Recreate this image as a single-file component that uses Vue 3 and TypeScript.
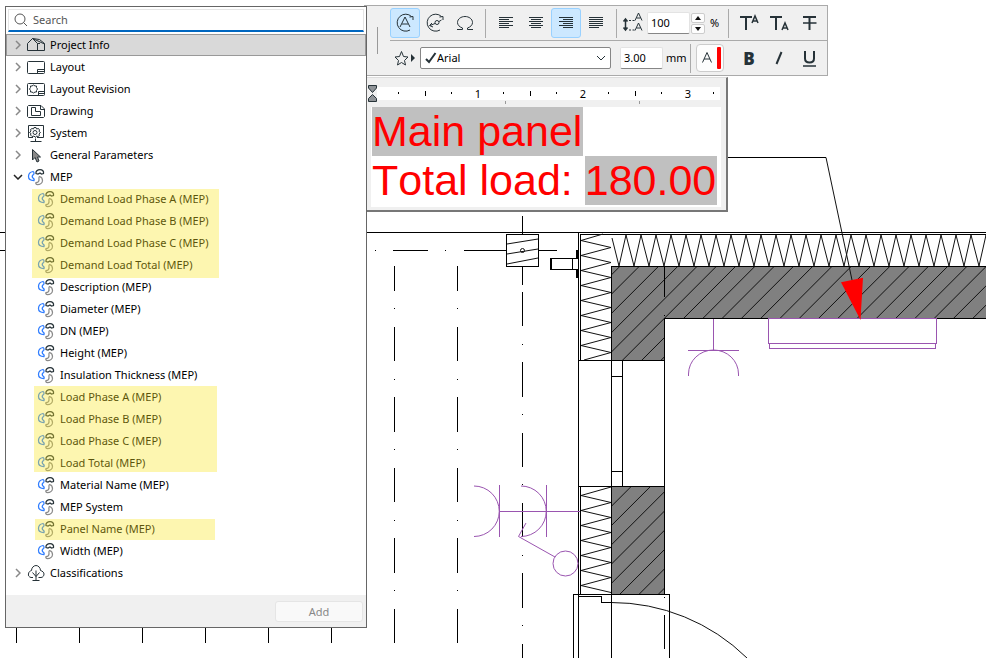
<script setup lang="ts">
import { ref } from 'vue'

interface Leaf { label: string }
interface Run { marked: boolean; shape?: string; items: Leaf[] }

const query = ref('')
const scale = ref('100')
const size = ref('3.00')
const font = ref('Arial')

const groups = [
  { label: 'Project Info', icon: 'house' },
  { label: 'Layout', icon: 'layout' },
  { label: 'Layout Revision', icon: 'revision' },
  { label: 'Drawing', icon: 'drawing' },
  { label: 'System', icon: 'system' },
  { label: 'General Parameters', icon: 'cursor' },
]

const leaves = (...names: string[]): Leaf[] => names.map((label) => ({ label }))

const runs: Run[] = [
  {
    marked: true,
    shape: 'wide',
    items: leaves('Demand Load Phase A (MEP)', 'Demand Load Phase B (MEP)', 'Demand Load Phase C (MEP)', 'Demand Load Total (MEP)'),
  },
  { marked: false, items: leaves('Description (MEP)', 'Diameter (MEP)', 'DN (MEP)', 'Height (MEP)', 'Insulation Thickness (MEP)') },
  { marked: true, shape: 'medium', items: leaves('Load Phase A (MEP)', 'Load Phase B (MEP)', 'Load Phase C (MEP)', 'Load Total (MEP)') },
  { marked: false, items: leaves('Material Name (MEP)', 'MEP System') },
  { marked: true, shape: 'single', items: leaves('Panel Name (MEP)') },
  { marked: false, items: leaves('Width (MEP)') },
]

const aligns = [
  { name: 'Align left', lines: [[1, 15], [1, 11], [1, 15], [1, 11], [1, 15], [1, 11]] },
  { name: 'Align centre', lines: [[1, 15], [3, 13], [1, 15], [3, 13], [1, 15], [3, 13]] },
  { name: 'Align right', lines: [[1, 15], [5, 15], [1, 15], [5, 15], [1, 15], [5, 15]] },
  { name: 'Justify', lines: [[1, 15], [1, 15], [1, 15], [1, 15], [1, 15], [1, 11]] },
]
const activeAlign = ref(2)

// Insulation zigzags and 45 degree wall hatching
const zigzagDown = (start: number, end: number, firstLeft: number): string => {
  const pts = [`611,${start}`]
  for (let y = firstLeft; y < end; y += 15) {
    pts.push(`581,${y}`)
    if (y + 7 < end) pts.push(`611,${y + 7}`)
  }
  return pts.join(' ')
}
const upperZigzag = '603,234 ' + zigzagDown(234, 358, 240.5).split(' ').slice(1).join(' ') + ' 584,360'
const lowerZigzag = zigzagDown(487, 594, 495.5)
const topZigzag = (() => {
  const pts = ['612,238']
  for (let x = 619; x < 1000; x += 15) pts.push(`${x},266`, `${x + 7},235`)
  return pts.join(' ')
})()
const hatch = Array.from({ length: 26 }, (_, i) => 886.3 + i * 19.28)
const gridDashes = [[266, 291], [308, 309], [327, 361], [379, 380], [397, 432], [449, 450], [468, 502], [520, 521], [538, 573], [590, 591], [609, 643]]
const axisDashes = [[216, 234], [266, 285], [292, 326], [344, 345], [362, 397], [414, 415], [433, 467], [484, 485], [503, 537], [555, 556], [573, 608], [625, 626], [644, 658]]
const ticks = [16, 79, 142, 205, 268, 331]
const rulerDots = [31, 84, 136, 189, 241, 294, 346]
const rulerTicks = [58, 163, 268]
</script>

<template>
  <main class="workspace">
    <svg class="plan" viewBox="0 0 986 658" preserveAspectRatio="xMinYMin slice" aria-hidden="true">
      <defs>
        <clipPath id="wall">
          <path d="M611 266H986V318H664V360H611ZM611 486H664V594H611Z" />
        </clipPath>
      </defs>
      <g class="sharp">
        <path d="M0 232.5H5M0 250.5H5M367 232.5H986M580 234.5H986" />
        <path d="M375 250.5h1M393 250.5H428M445 250.5h1M464 250.5H506M539 250.5H557" />
        <path v-for="(d, i) in gridDashes" :key="'g' + i" :d="`M394.5 ${d[0]}V${d[1]}M457.5 ${d[0]}V${d[1]}`" />
        <path v-for="(d, i) in axisDashes" :key="'a' + i" :d="`M522.5 ${d[0]}V${d[1]}`" />
        <path v-for="x in ticks" :key="x" :d="`M${x + 0.5} 628V643`" />
        <path d="M506.5 234.5H538.5V266.5H506.5Z" />
        <path d="M550.5 258.5H578V269.5H550.5ZM551.5 258V270M572.5 258V270" />
        <path d="M576.5 250V258M577.5 250V258M576.5 270V278M577.5 270V278" />
      </g>
      <path class="wall" d="M611 266H986V318H664V360H611ZM611 486H664V594H611Z" />
      <g clip-path="url(#wall)" class="fine">
        <path v-for="c in hatch" :key="c" :d="`M${c - 220} 220L${c - 620} 620`" />
      </g>
      <g class="fine">
        <path d="M507 244L538 239M507 254L538 249M507 264L538 258" />
        <circle cx="522.5" cy="250.5" r="2" />
        <polyline :points="upperZigzag" />
        <polyline :points="lowerZigzag" />
        <polyline :points="topZigzag" />
        <path d="M611 602.5A194 194 0 0 1 747 658M826 157.5L852 280" />
      </g>
      <g class="sharp">
        <path d="M578.5 232V658M580.5 234V360M580.5 486V594M611.5 266V658M622.5 360V486M611 376.5H622M611 471.5H622" />
        <path d="M578 360.5H665M578 486.5H665M664.5 318V594M611 266.5H986M664 318.5H986M664.5 266V297M664.5 315v1" />
        <path d="M573.5 658V594.5H669.5V658M578 596.5H601.5V602.5H611M664.5 597v1M664.5 615V649M728 157.5H826" />
      </g>
      <g class="violet">
        <path class="crisp" d="M499.5 485V537M546.5 485V537M499 511.5H580M713.5 319V350M688 350.5H739M768.5 318.5H936.5V343.5H768.5ZM769.5 343.5H935.5V348.5H769.5Z" />
        <path d="M474 486A25.25 25.25 0 0 1 474 536.5M521 486A25.25 25.25 0 0 1 521 536.5M688.5 376V374A25 24 0 0 1 738.5 374V376M555 557L518.5 536.5L526 523" />
        <circle cx="565.5" cy="563.5" r="12.5" />
      </g>
      <path class="arrow" d="M841 282.3L863 277.7L860.5 320Z" />
    </svg>

    <section class="toolbar" aria-label="Text formatting">
      <div class="grip"><span></span></div>
      <div class="rows">
        <div class="row first">
          <button class="tool on" type="button" aria-label="Auto text">
            <svg viewBox="0 0 22 22" class="ico"><path d="M17.5 4.5A8.5 8.5 0 1 0 16 18M19 8V4.5L15.500 5" /><path d="M6 15L11 5L16 15M8 12H14" /></svg>
          </button>
          <button class="tool" type="button" aria-label="Linked text">
            <svg viewBox="0 0 22 22" class="ico"><path d="M17.500 4.500A8.500 8.500 0 1 0 16 18M19 8V4.5L15.500 5" /><circle cx="13" cy="10.500" r="2" /><path d="M11 11.500L6 13.500M8 11L5.500 13.500L9 15M15 9.500L17.500 8" /></svg>
          </button>
          <button class="tool" type="button" aria-label="Insert symbol">
            <svg viewBox="0 0 22 22" class="ico"><path d="M3 17.500H8.500V16C5.500 15 3.500 13 3.500 10.500C3.500 7 7 4.500 11 4.500S18.500 7 18.500 10.500C18.500 13 16.500 15 13.500 16V17.500H19" /></svg>
          </button>
          <i class="rule"></i>
          <button v-for="(a, i) in aligns" :key="a.name" class="tool" :class="{ on: activeAlign === i }" type="button" :aria-label="a.name" @click="activeAlign = i">
            <svg viewBox="0 0 16 16" class="lines"><path v-for="(l, n) in a.lines" :key="n" :d="`M${l[0]} ${n * 2 + 2.5}H${l[1]}`" /></svg>
          </button>
          <i class="rule"></i>
          <svg viewBox="0 0 22 22" class="ico"><path class="heavy" d="M3.500 8V17M1.500 9.500L3.500 7L5.500 9.500M1.500 15.500L3.500 18L5.500 15.500" /><path d="M7 8.500h2M10.500 8.500h2M7 18h2M10.500 18h2M13 8.500L16.500 1L20 8.500M14.500 6H18.500M13 18.500L16.500 11L20 18.500M14.500 16H18.500" /></svg>
          <input v-model="scale" class="num scale" aria-label="Line spacing" />
          <span class="spin">
            <button type="button" aria-label="Increase"><svg viewBox="0 0 6 4"><path d="M0 4L3 0L6 4Z" /></svg></button>
            <button type="button" aria-label="Decrease"><svg viewBox="0 0 6 4"><path d="M0 0L3 4L6 0Z" /></svg></button>
          </span>
          <span class="unit">%</span>
          <div class="tail">
            <i class="rule"></i>
            <button class="tool" type="button" aria-label="Superscript"><svg viewBox="0 0 22 22" class="ico"><path class="bold" d="M2 5H14M8 5V18" /><path class="heavy" d="M14 11L17 4L20 11M15 9H19" /></svg></button>
            <button class="tool" type="button" aria-label="Subscript"><svg viewBox="0 0 22 22" class="ico"><path class="bold" d="M2 5H14M8 5V18" /><path class="heavy" d="M14 18L17 11L20 18M15 16H19" /></svg></button>
            <button class="tool" type="button" aria-label="Strikethrough"><svg viewBox="0 0 22 22" class="ico"><path class="bold" d="M5 5H18M11.500 5V18" /><path class="heavy" d="M5 11H18.500" /></svg></button>
          </div>
        </div>
        <div class="row">
          <button class="tool star" type="button" aria-label="Favourites">
            <svg viewBox="0 0 24 18" class="favourite"><path d="M8.500 2.500L10.500 7.500L15 8L11.500 11.500L12.500 16L8.500 13.500L4.500 16L5.500 11.500L2 8L6.500 7.500Z" /><path class="solid" d="M18 5L22 9L18 13Z" /></svg>
          </button>
          <label class="combo">
            <svg viewBox="0 0 12 12" class="check"><path d="M1 7L4 10L10.500 1" /></svg>
            <select v-model="font" aria-label="Font"><option>Arial</option></select>
            <svg viewBox="0 0 10 6" class="drop"><path d="M1 1L5 5L9 1" /></svg>
          </label>
          <input v-model="size" class="num size" aria-label="Text size" />
          <span class="unit">mm</span>
          <div class="tail">
            <i class="rule"></i>
            <button class="pen" type="button" aria-label="Pen colour">
              <svg viewBox="0 0 26 26"><path d="M5.500 17.500L10 7.500L14.500 17.500M7 14H13" /><rect x="20" y="2" width="4" height="22" rx="1" /></svg>
            </button>
            <button class="tool letter" type="button">B</button>
            <button class="tool" type="button" aria-label="Italic"><svg viewBox="0 0 22 22" class="ico"><path class="bold" d="M13.500 5L8.500 17" /></svg></button>
            <button class="tool" type="button" aria-label="Underline"><svg viewBox="0 0 22 22" class="ico"><path class="bold" d="M7 4V11.500C7 14 8.500 15.500 11.500 15.500S16 14 16 11.500V4" /><path class="heavy" d="M5 19H18" /></svg></button>
          </div>
        </div>
      </div>
    </section>

    <section class="editor" aria-label="Text editor">
      <svg class="ruler" viewBox="0 0 354 23" preserveAspectRatio="xMinYMin meet">
        <path class="paper" d="M10 3H353V16H10Z" />
        <path v-for="x in rulerDots" :key="'d' + x" class="mark" :d="`M${x}.5 8V10`" />
        <path v-for="x in rulerTicks" :key="'t' + x" class="mark" :d="`M${x}.5 7V12`" />
        <path class="tab" d="M138.5 17V20M272.5 17V20" />
        <text x="111" y="14">1</text>
        <text x="216" y="14">2</text>
        <text x="321" y="14">3</text>
        <path class="indent" d="M1.500 1.500H9.500V4L5.500 8.500L1.500 4ZM5.500 10.500L9.500 14.500V17.500H1.500V14.500Z" />
      </svg>
      <div class="note" role="textbox" aria-multiline="true" aria-label="Label text" tabindex="0">
        <p><mark>Main panel</mark></p>
        <p>Total load: <mark>180.00</mark></p>
      </div>
    </section>

    <aside class="panel">
      <label class="search">
        <svg viewBox="0 0 14 14"><circle cx="6" cy="6" r="5" /><path d="M9.500 9.500L13 13" /></svg>
        <input v-model="query" type="text" placeholder="Search" aria-label="Search" />
      </label>

      <svg class="sprite" aria-hidden="true">
        <symbol id="house" viewBox="0 0 18 18"><path d="M.5 14.500V7.500L5.500 2.500L10.500 7.500V14.500M5.500 2.500L12.500 3.500L17.500 7.500V14.500H.5M5.500 2.500L17.500 8M10.500 7.500H13" /></symbol>
        <symbol id="layout" viewBox="0 0 18 18"><rect x=".5" y="3.500" width="17" height="12" rx="1" /><path d="M17.500 11.500H10.500V15.500M10.500 13.500H17.500" /></symbol>
        <symbol id="revision" viewBox="0 0 18 18"><rect x=".5" y="3.500" width="17" height="12" rx="1" /><path d="M17.500 11.500H11.500V15.500M11.500 13.500H17.500M6.500 5L8 6H9.500V7.500L10.500 9L9.500 10.500V12H8L6.500 13L5 12H3.500V10.500L2.500 9L3.500 7.500V6H5Z" /></symbol>
        <symbol id="drawing" viewBox="0 0 18 18"><path d="M1.500 3.500H14L17.500 7V14.500L16.500 15.500H1.500L.5 14.500V4.500ZM13.500 3.500V7.500H17.500M4.500 5.500H8.500V9.500H13.500V13.500H4.500Z" /></symbol>
        <symbol id="system" viewBox="0 0 18 18"><path d="M6 13.500H1.500V1.500H16.500V13.500H10M8.500 14.500V17.500M3.500 17.500H14.500" /><circle cx="8" cy="8.500" r="2" /><path d="M7 3.500H9L9.500 5L11.500 4.500L12.500 6L12 7.500L13.500 8.500L12 10L12.500 11.500L11 12.500L9.500 12L8.500 13.500L7 12L5 12.500L3.500 11L4 9.500L2.500 8.500L4 7L3.500 5.500L5 4.500L6.500 5Z" /></symbol>
        <symbol id="cursor" viewBox="0 0 18 18"><path class="grey" d="M5.500 3.500V14L8 11.500L10 16L12 15L10.500 11H13.500Z" /></symbol>
        <symbol id="mep" viewBox="0 0 18 18">
          <path class="blue" d="M6 3.500C3 4 1.500 6 1.500 8.500S4 12.500 7 12.500C7.500 11.500 7 10.500 5.500 9.500C5 8.500 5 7.500 6.500 6.500C7.500 5.500 7 4 6 3.500Z" />
          <path class="dome" d="M9 5.500C8.500 3.500 10.500 1.500 13 1.500S17 3.500 16.500 5.500L14.500 6L13 5L11 6Z" />
          <path class="silver" d="M12.500 8.500C14.500 9 15.500 10.500 15.500 12.500C15.500 15 13 16.500 10.500 16.500C9 16.500 8.500 15.500 9 14.500C11 14.500 12 13.500 12 12C12 11 11.500 9 12.500 8.500Z" />
        </symbol>
        <symbol id="tree" viewBox="0 0 18 18"><path d="M6 13.500H4C2 13 1 11.500 1.500 10C1.500 8 3 7 4.500 6.500C4.500 4 6.500 1.500 9 1.500S13.500 4 13.500 6.500C15.500 7 17 8.500 17 10S16 13.500 14 13.500H11.500M9 6.500V16.500M5.500 16.500H12.500M5.500 8.500L9 12.500L12.500 8.500" /></symbol>
      </svg>

      <ul class="tree">
        <li v-for="(g, i) in groups" :key="g.label">
          <button type="button" class="node" :class="{ selected: i === 0 }">
            <svg class="chevron" viewBox="0 0 6 10"><path d="M1 1L5 5L1 9" /></svg>
            <svg class="glyph"><use :href="'#' + g.icon" /></svg>{{ g.label }}
          </button>
        </li>
        <li>
          <button type="button" class="node open">
            <svg class="chevron down" viewBox="0 0 10 6"><path d="M1 1L5 5L9 1" /></svg>
            <svg class="glyph"><use href="#mep" /></svg>MEP
          </button>
          <ul v-for="(r, i) in runs" :key="i" class="run" :class="[{ marked: r.marked }, r.shape]">
            <li v-for="leaf in r.items" :key="leaf.label">
              <button type="button" class="node leaf"><svg class="glyph"><use href="#mep" /></svg>{{ leaf.label }}</button>
            </li>
          </ul>
        </li>
        <li>
          <button type="button" class="node">
            <svg class="chevron" viewBox="0 0 6 10"><path d="M1 1L5 5L1 9" /></svg>
            <svg class="glyph"><use href="#tree" /></svg>Classifications
          </button>
        </li>
      </ul>

      <footer><button type="button" class="add" disabled>Add</button></footer>
    </aside>
  </main>
</template>

<style>
body { background: #fff; }
</style>

<style scoped>
* { box-sizing: border-box; }
.workspace { position: relative; min-height: 100vh; overflow: hidden; font: 11px/22px "Noto Sans", "Open Sans", sans-serif; color: #000; }
button, input, select { font: inherit; color: inherit; }
button { padding: 0; border: 0; background: none; }
svg { display: block; fill: none; stroke: #263238; }
ul { list-style: none; margin: 0; padding: 0; }

.plan { position: absolute; inset: 0; width: 100%; height: 100%; stroke: #000; }
.sharp, .crisp { shape-rendering: crispEdges; }
.fine { stroke: #111; }
.wall { fill: #808080; stroke: none; }
.violet { stroke: #9a55b0; }
.arrow { fill: #f00; stroke: none; }

.toolbar { position: absolute; left: 364px; top: 5px; width: 464px; display: flex; background: #f0f0f0; border: 1px solid #aaa; border-left: 0; }
.grip { width: 26px; flex: none; display: flex; align-items: center; justify-content: center; }
.grip span { width: 1px; height: 27px; background: #999; }
.rows { flex: 1; min-width: 0; }
.row { display: flex; align-items: center; height: 34px; }
.row.first { height: 35px; border-bottom: 1px solid #aaa; }
.tool { display: flex; align-items: center; justify-content: center; flex: none; width: 30px; height: 30px; border: 1px solid transparent; border-radius: 3px; }
.tool.on { background: #cce8ff; border-color: #99d1ff; }
.ico { width: 22px; height: 22px; flex: none; }
.heavy { stroke-width: 1.5; }
.bold { stroke-width: 2; }
.lines { width: 16px; height: 16px; flex: none; shape-rendering: crispEdges; }
.rule { flex: none; width: 1px; height: 29px; margin: 0 5px; background: #aaa; }
.num { height: 22px; border: 1px solid #e3e3e3; border-bottom-color: #868686; border-radius: 2px; padding: 0 3px; background: #fff; outline: 0; }
.scale { width: 43px; margin-left: 3px; }
.size { width: 43px; margin-left: 9px; }
.spin { display: flex; flex-direction: column; gap: 1px; margin: 0 5px 0 1px; }
.spin button { display: grid; place-items: center; width: 14px; height: 10px; border: 1px solid #ccc; border-radius: 2px; background: #fdfdfd; }
.spin svg { width: 6px; height: 4px; fill: #111; stroke: none; }
.unit { margin-left: 3px; }
.spin + .unit { margin-left: 0; }
.tail { display: flex; align-items: center; margin-left: auto; padding-right: 3px; }
.favourite { width: 24px; height: 18px; flex: none; }
.solid { fill: #263238; stroke: none; }
.combo { display: flex; align-items: center; flex: none; width: 191px; height: 22px; padding: 0 4px; border: 1px solid #868686; border-radius: 2px; background: #fff; }
.check { width: 12px; height: 12px; flex: none; stroke-width: 2; }
.combo select { flex: 1; appearance: none; border: 0; padding: 0; background: none; outline: 0; }
.drop { width: 10px; height: 6px; flex: none; }
.pen { flex: none; width: 28px; height: 28px; border: 1px solid #ccc; border-radius: 4px; background: #fdfdfd; }
.pen svg { width: 26px; height: 26px; }
.pen rect { fill: #f00; stroke: none; }
.pen + .tool { margin-left: 10px; }
.combo ~ .tail .rule { margin: 0 5px 0 3px; }
.letter { font: 900 17px "Noto Sans", sans-serif; color: #263238; }

.editor { position: absolute; left: 367px; top: 77px; width: 361px; padding: 6px 5px 3px 0; background: #f0f0f0; border: solid #777; border-width: 0 2px 2px 0; border-top: 1px solid #ddd; }
.ruler { width: 100%; height: 23px; overflow: visible; }
.ruler .paper { fill: #fff; stroke: none; }
.ruler .mark { stroke: #000; shape-rendering: crispEdges; }
.ruler .tab { stroke: #999; shape-rendering: crispEdges; }
.ruler text { font: 11px "Noto Sans", sans-serif; text-anchor: middle; fill: #000; stroke: none; }
.ruler .indent { fill: #909498; }
.note { margin-left: 4px; padding: 0 0 2px 1px; background: #fff; font: 43px/49px Arial, "Liberation Sans", sans-serif; font-kerning: none; color: #f00; white-space: nowrap; outline: 0; }
.note p { margin: 0; }
.note mark { display: inline-block; height: 49px; padding: 0 1px 0 0; background: #c0c0c0; color: inherit; }

.panel { position: absolute; left: 5px; top: 6px; width: 362px; background: #fff; border: 1px solid #666; }
.search { display: flex; align-items: center; height: 23px; margin: 2px; padding: 0 5px; gap: 5px; border: 1px solid #e5e5e5; border-bottom: 2px solid #0067c0; }
.search svg { width: 14px; height: 14px; flex: none; stroke: #555; }
.search input { flex: 1; min-width: 0; height: 20px; padding: 0; border: 0; background: none; outline: 0; }
.search input::placeholder { color: #555; opacity: 1; }
.sprite { position: absolute; width: 0; height: 0; }
.node { display: flex; align-items: center; width: 100%; height: 22px; padding-left: 9px; text-align: left; white-space: nowrap; }
.node.selected { padding-left: 8px; background: #d9d9d9; border: 1px solid #999; }
.node.open { padding-left: 7px; }
.node.leaf { padding-left: 31px; }
.chevron { width: 6px; height: 10px; margin-right: 6px; flex: none; stroke: #888; stroke-width: 1.5; }
.chevron.down { width: 10px; height: 6px; margin-right: 4px; stroke: #222; }
.glyph { width: 18px; height: 18px; margin-right: 5px; flex: none; }
.grey { fill: #888; }
.blue { stroke: #2f7dff; stroke-width: 1.25; }
.dome { stroke-width: 1.25; }
.silver { stroke: #8a8a8a; stroke-width: 1.25; }
.run { position: relative; }
.run.marked::after { content: ""; position: absolute; left: 28px; top: 0; bottom: 2px; width: 183px; background: rgba(250, 230, 35, 0.36); pointer-events: none; }
.run.wide::after { left: 26px; top: 1px; bottom: -2px; width: 187px; }
.run.single::after { left: 29px; top: 1px; bottom: 0; width: 180px; }
.panel footer { display: flex; justify-content: flex-end; margin-top: 11px; padding: 6px 3px 5px; background: #f0f0f0; }
.add { width: 88px; height: 21px; line-height: 19px; border: 1px solid #e5e5e5; border-radius: 3px; background: #f9f9f9; color: #888; }
</style>
